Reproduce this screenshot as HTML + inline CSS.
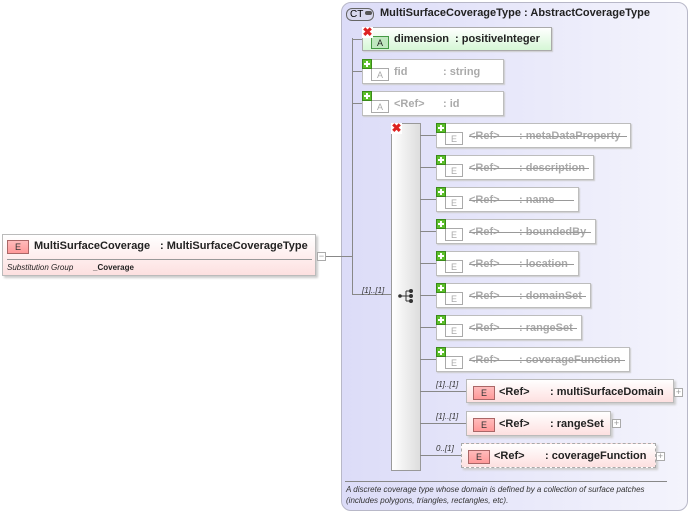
<!DOCTYPE html>
<html><head><style>
body{margin:0;width:690px;height:514px;background:#fff;position:relative;overflow:hidden;font-family:"Liberation Sans",sans-serif;}
.a{position:absolute}
.panel{left:341px;top:2px;width:347px;height:509px;border:1px solid #b8b8c8;border-radius:10px;background:linear-gradient(90deg,#dcdcf8,#f4f4fc);box-sizing:border-box}
.ln{position:absolute;background:#888}
.box{position:absolute;border:1px solid #bdbdbd;background:#fff;box-sizing:border-box;box-shadow:1px 1px 1px #ccc}
.gt{position:absolute;font-size:11px;color:#aaa;font-weight:bold;top:6px;white-space:nowrap}
.strike{position:absolute;height:1px;background:#999;top:12px}
.badge{position:absolute;left:8px;top:8px;width:18px;height:13px;border:1px solid #aaa;box-sizing:border-box;font-size:9px;color:#aaa;text-align:center;line-height:12px}
.plus{position:absolute;left:0;top:0;width:10px;height:10px;background:#5cbf2a;border:1px solid #3a8a1a;box-sizing:border-box}
.plus:before{content:"";position:absolute;left:3px;top:1px;width:2px;height:6px;background:#fff}
.plus:after{content:"";position:absolute;left:1px;top:3px;width:6px;height:2px;background:#fff}
.xx{position:absolute;width:11px;height:11px;background:#fff;color:#d22;font-size:12px;font-weight:bold;line-height:10px;text-align:center}
.eb{position:absolute;border:1px solid #bbb;background:linear-gradient(#fff,#fde0e0);box-sizing:border-box;box-shadow:2px 2px 2px #ccc}
.ebad{position:absolute;left:6px;top:6px;width:22px;height:14px;border:1px solid #a66;background:linear-gradient(#fbb,#f99);box-sizing:border-box;font-size:9px;text-align:center;line-height:13px;color:#333}
.bt{position:absolute;font-size:11px;font-weight:bold;color:#222;white-space:nowrap;top:6px}
.sm{position:absolute;width:9px;height:9px;border:1px solid #aaa;box-sizing:border-box;background:#fff;font-size:9px;line-height:7px;color:#999;text-align:center}
.card{position:absolute;font-size:8px;font-style:italic;color:#333}
</style></head><body>
<div class="a panel"></div>
<div class="a" style="left:346px;top:8px;width:28px;height:13px;border:1px solid #666;border-radius:6px;background:#d8d8ee;font-size:10px;line-height:12px;box-sizing:border-box;padding-left:3px">CT<span style="display:inline-block;width:7px;height:4px;background:#555;border-radius:2px;margin-left:2px;vertical-align:2px"></span></div>
<div class="a" style="left:380px;top:7px;font-size:11px;font-weight:bold;color:#222">MultiSurfaceCoverageType : AbstractCoverageType</div>

<div class="ln" style="left:352px;top:38px;width:1px;height:257px"></div>
<div class="ln" style="left:352px;top:39px;width:12px;height:1px"></div>
<div class="ln" style="left:352px;top:71px;width:12px;height:1px"></div>
<div class="ln" style="left:352px;top:103px;width:12px;height:1px"></div>
<div class="ln" style="left:352px;top:294px;width:39px;height:1px"></div>

<div class="box" style="left:362px;top:27px;width:190px;height:24px;background:linear-gradient(#fff,#d6f7d6);border-color:#aaa">
 <div class="badge" style="border-color:#494;color:#222;background:#bfe8bf">A</div>
 <div class="bt" style="left:31px;top:5px">dimension</div><div class="bt" style="left:92px;top:5px">: positiveInteger</div></div>
<div class="xx" style="left:362px;top:27px">✖</div>

<div class="box" style="left:362px;top:59px;width:142px;height:25px"><div class="badge">A</div><div class="gt" style="left:31px">fid</div><div class="gt" style="left:80px">: string</div></div><div class="plus a" style="left:362px;top:59px"></div>
<div class="box" style="left:362px;top:91px;width:142px;height:25px"><div class="badge">A</div><div class="gt" style="left:31px">&lt;Ref&gt;</div><div class="gt" style="left:80px">: id</div></div><div class="plus a" style="left:362px;top:91px"></div>

<div class="a" style="left:391px;top:123px;width:30px;height:348px;border:1px solid #999;box-sizing:border-box;background:linear-gradient(90deg,#fff,#ddd)"></div>
<div class="xx" style="left:391px;top:123px">✖</div>
<svg class="a" style="left:398px;top:288px" width="18" height="16"><circle cx="2" cy="8" r="1.8" fill="#333"/><line x1="2" y1="8" x2="8" y2="8" stroke="#333"/><line x1="8" y1="3" x2="8" y2="13" stroke="#333"/><line x1="8" y1="3" x2="13" y2="3" stroke="#333"/><line x1="8" y1="8" x2="13" y2="8" stroke="#333"/><line x1="8" y1="13" x2="13" y2="13" stroke="#333"/><circle cx="13" cy="3" r="2" fill="#333"/><circle cx="13" cy="8" r="2" fill="#333"/><circle cx="13" cy="13" r="2" fill="#333"/></svg>
<div class="card" style="left:362px;top:286px">[1]..[1]</div>

<!-- gray elements -->
<div class="ln" style="left:420px;top:135px;width:16px;height:1px"></div>
<div class="box" style="left:436px;top:123px;width:195px;height:25px"><div class="badge">E</div><div class="gt" style="left:32px">&lt;Ref&gt;</div><div class="gt" style="left:82px">: metaDataProperty</div><div class="strike" style="left:32px;width:158px"></div></div><div class="plus a" style="left:436px;top:123px"></div>
<div class="ln" style="left:420px;top:167px;width:16px;height:1px"></div>
<div class="box" style="left:436px;top:155px;width:158px;height:25px"><div class="badge">E</div><div class="gt" style="left:32px">&lt;Ref&gt;</div><div class="gt" style="left:82px">: description</div><div class="strike" style="left:32px;width:120px"></div></div><div class="plus a" style="left:436px;top:155px"></div>
<div class="ln" style="left:420px;top:199px;width:16px;height:1px"></div>
<div class="box" style="left:436px;top:187px;width:143px;height:25px"><div class="badge">E</div><div class="gt" style="left:32px">&lt;Ref&gt;</div><div class="gt" style="left:82px">: name</div><div class="strike" style="left:32px;width:105px"></div></div><div class="plus a" style="left:436px;top:187px"></div>
<div class="ln" style="left:420px;top:231px;width:16px;height:1px"></div>
<div class="box" style="left:436px;top:219px;width:160px;height:25px"><div class="badge">E</div><div class="gt" style="left:32px">&lt;Ref&gt;</div><div class="gt" style="left:82px">: boundedBy</div><div class="strike" style="left:32px;width:122px"></div></div><div class="plus a" style="left:436px;top:219px"></div>
<div class="ln" style="left:420px;top:263px;width:16px;height:1px"></div>
<div class="box" style="left:436px;top:251px;width:143px;height:25px"><div class="badge">E</div><div class="gt" style="left:32px">&lt;Ref&gt;</div><div class="gt" style="left:82px">: location</div><div class="strike" style="left:32px;width:105px"></div></div><div class="plus a" style="left:436px;top:251px"></div>
<div class="ln" style="left:420px;top:295px;width:16px;height:1px"></div>
<div class="box" style="left:436px;top:283px;width:155px;height:25px"><div class="badge">E</div><div class="gt" style="left:32px">&lt;Ref&gt;</div><div class="gt" style="left:82px">: domainSet</div><div class="strike" style="left:32px;width:117px"></div></div><div class="plus a" style="left:436px;top:283px"></div>
<div class="ln" style="left:420px;top:327px;width:16px;height:1px"></div>
<div class="box" style="left:436px;top:315px;width:146px;height:25px"><div class="badge">E</div><div class="gt" style="left:32px">&lt;Ref&gt;</div><div class="gt" style="left:82px">: rangeSet</div><div class="strike" style="left:32px;width:108px"></div></div><div class="plus a" style="left:436px;top:315px"></div>
<div class="ln" style="left:420px;top:359px;width:16px;height:1px"></div>
<div class="box" style="left:436px;top:347px;width:194px;height:25px"><div class="badge">E</div><div class="gt" style="left:32px">&lt;Ref&gt;</div><div class="gt" style="left:82px">: coverageFunction</div><div class="strike" style="left:32px;width:156px"></div></div><div class="plus a" style="left:436px;top:347px"></div>

<!-- real elements -->
<div class="ln" style="left:420px;top:391px;width:46px;height:1px"></div>
<div class="card" style="left:436px;top:380px">[1]..[1]</div>
<div class="eb" style="left:466px;top:379px;width:208px;height:24px"><div class="ebad">E</div><div class="bt" style="left:32px">&lt;Ref&gt;</div><div class="bt" style="left:83px">: multiSurfaceDomain</div></div>
<div class="sm" style="left:674px;top:388px">+</div>
<div class="ln" style="left:420px;top:423px;width:46px;height:1px"></div>
<div class="card" style="left:436px;top:412px">[1]..[1]</div>
<div class="eb" style="left:466px;top:411px;width:145px;height:25px"><div class="ebad">E</div><div class="bt" style="left:32px">&lt;Ref&gt;</div><div class="bt" style="left:83px">: rangeSet</div></div>
<div class="sm" style="left:612px;top:419px">+</div>
<div class="ln" style="left:420px;top:455px;width:41px;height:1px"></div>
<div class="card" style="left:436px;top:444px">0..[1]</div>
<div class="eb" style="left:461px;top:443px;width:195px;height:25px;border:1px dashed #aaa"><div class="ebad">E</div><div class="bt" style="left:32px">&lt;Ref&gt;</div><div class="bt" style="left:83px">: coverageFunction</div></div>
<div class="sm" style="left:656px;top:452px">+</div>

<div class="ln" style="left:345px;top:481px;width:322px;height:1px"></div>
<div class="card" style="left:346px;top:484px;line-height:11px;width:320px">A discrete coverage type whose domain is defined by a collection of surface patches (includes polygons, triangles, rectangles, etc).</div>

<!-- left element -->
<div class="eb" style="left:2px;top:234px;width:314px;height:42px">
 <div class="ebad" style="left:4px;top:5px">E</div>
 <div class="bt" style="left:31px;top:5px">MultiSurfaceCoverage</div><div class="bt" style="left:157px;top:5px">: MultiSurfaceCoverageType</div>
 <div class="a" style="left:4px;top:24px;width:305px;height:1px;background:#999"></div>
 <div class="a" style="left:4px;top:28px;font-size:8px;font-style:italic;color:#222">Substitution Group</div>
 <div class="a" style="left:90px;top:28px;font-size:8px;font-weight:bold;color:#222">_Coverage</div>
</div>
<div class="sm" style="left:317px;top:252px">−</div>
<div class="ln" style="left:326px;top:256px;width:26px;height:1px"></div>
</body></html>
